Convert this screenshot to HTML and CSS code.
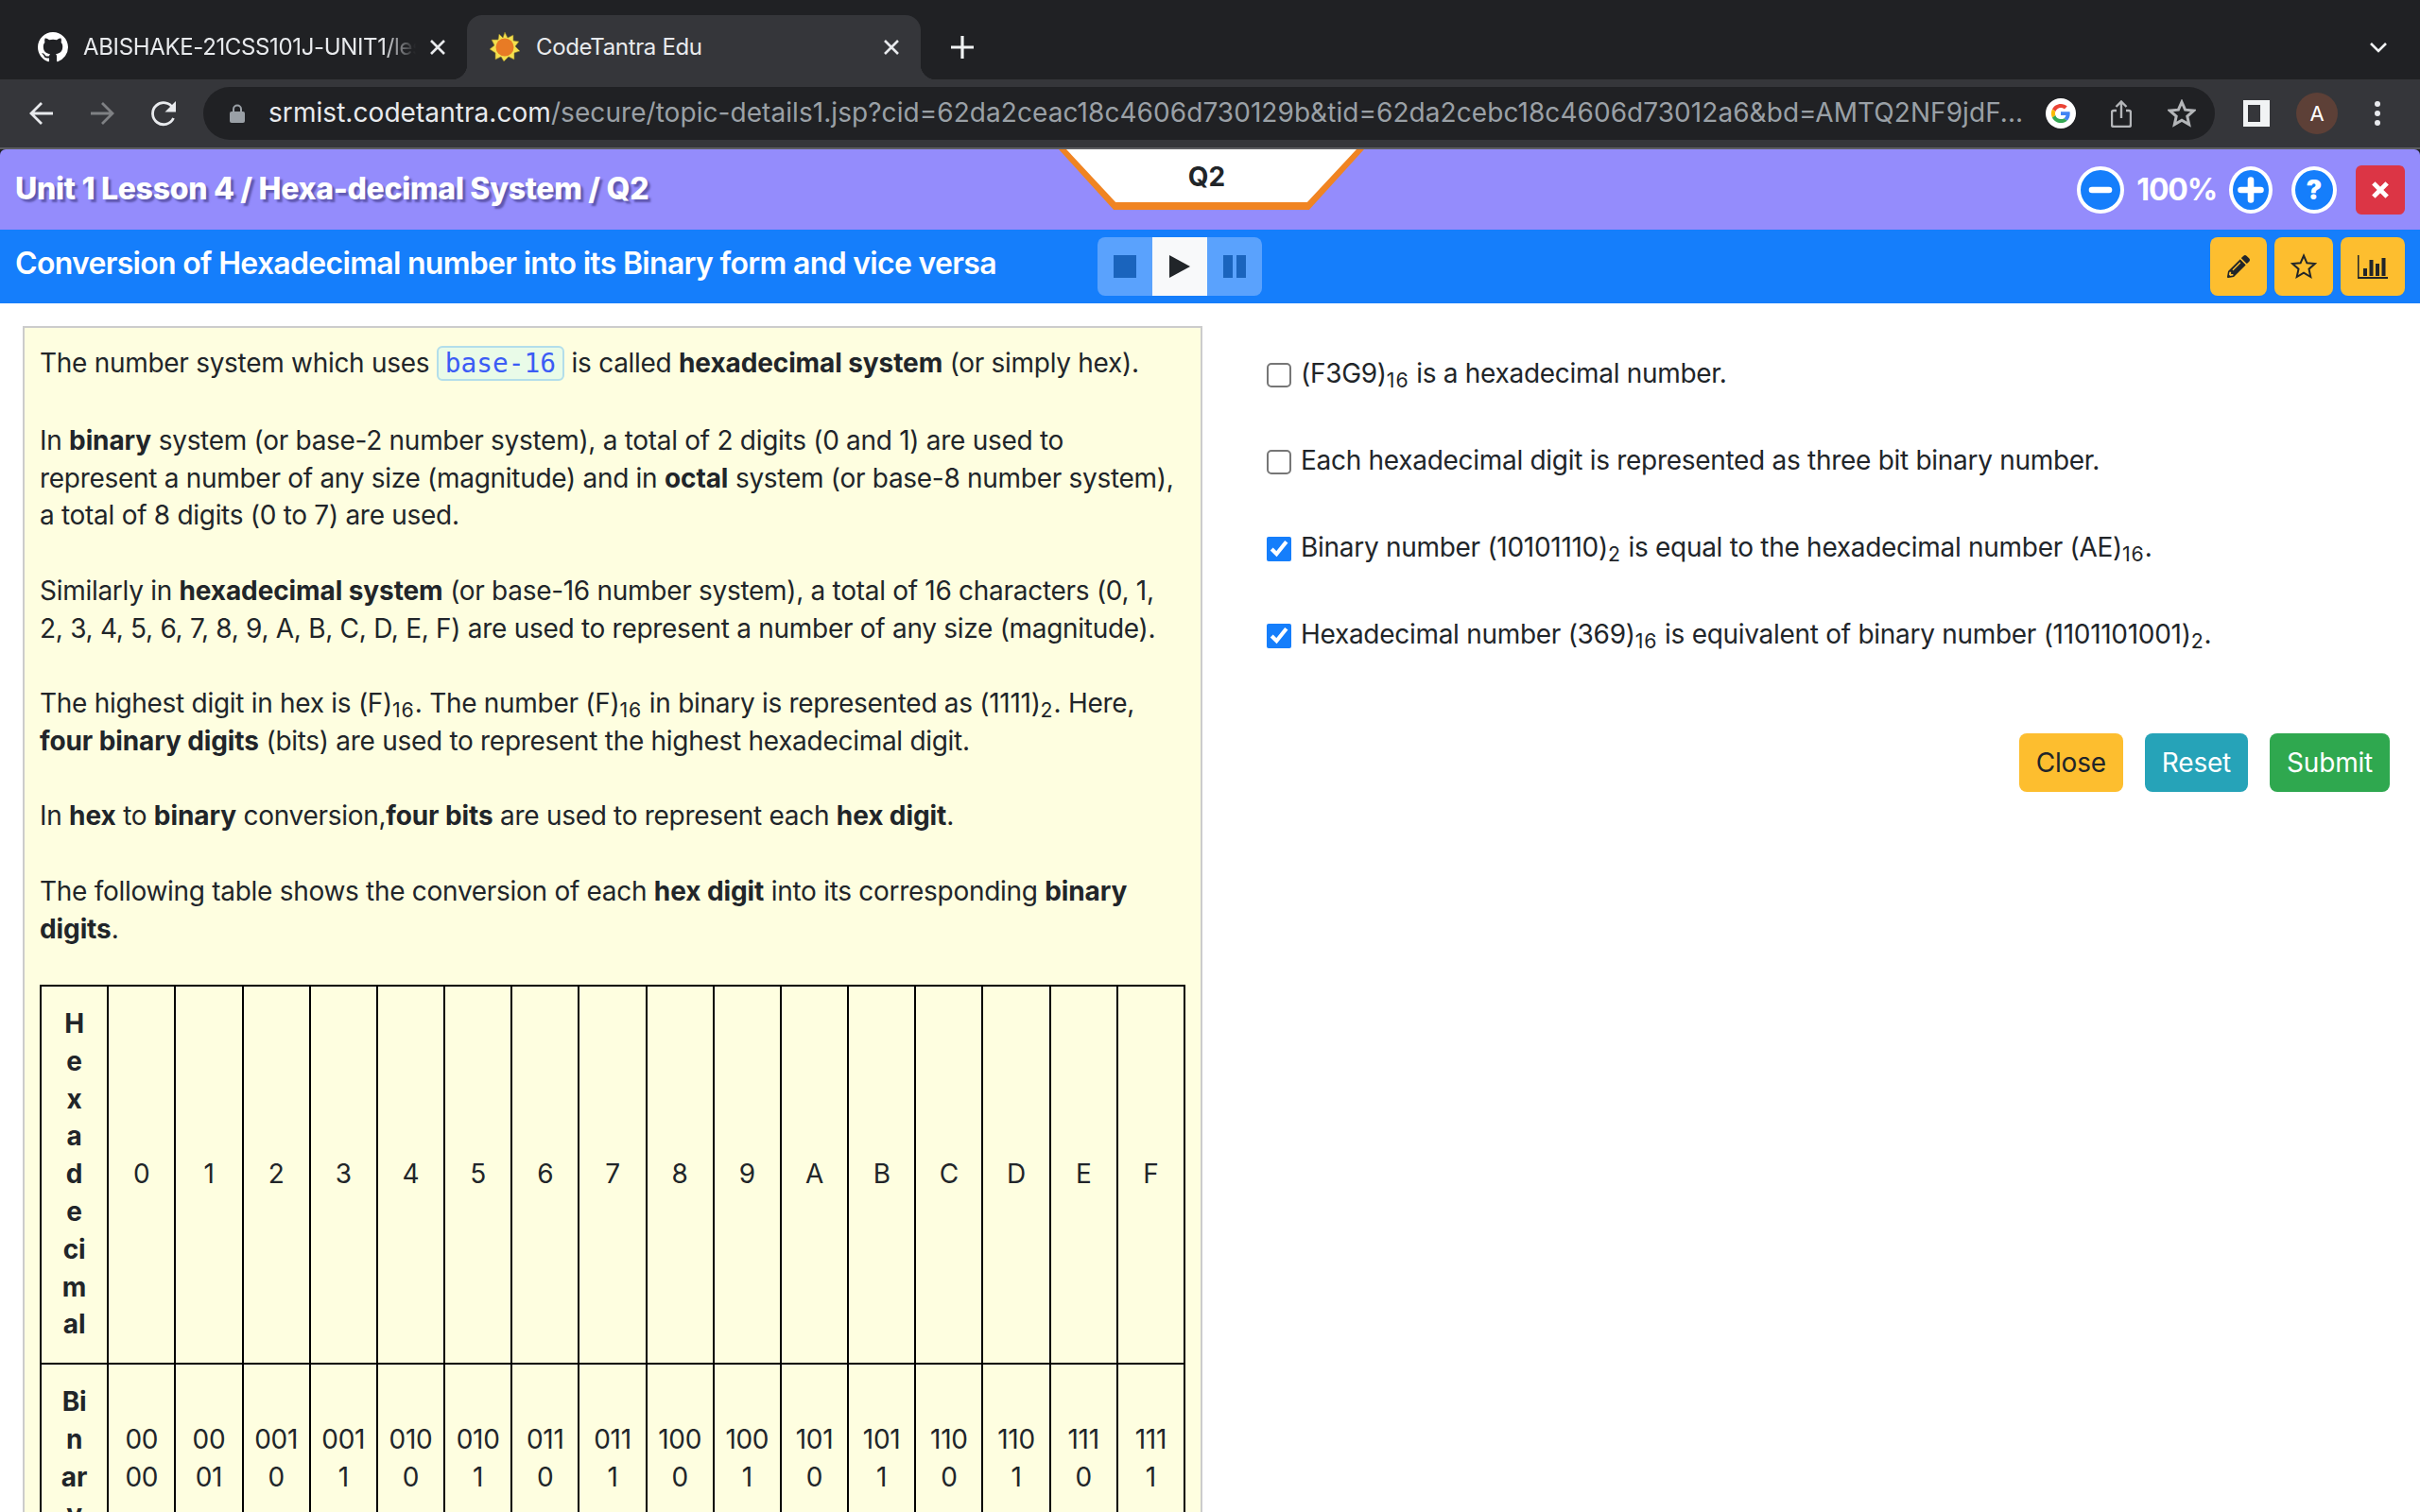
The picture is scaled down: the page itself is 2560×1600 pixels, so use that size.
FILE: index.html
```html
<!DOCTYPE html>
<html lang="en">
<head>
    <meta charset="UTF-8">
    <title>CodeTantra Edu</title>
    <link rel="stylesheet" href="styles.css">
</head>
<body>

<div class="tabstrip">
    <div class="tab tab-github">
        <svg class="tab-icon" viewBox="0 0 16 16"><path fill="#fff" d="M8 0C3.58 0 0 3.58 0 8c0 3.54 2.29 6.53 5.47 7.59.4.07.55-.17.55-.38 0-.19-.01-.82-.01-1.49-2.01.37-2.53-.49-2.69-.94-.09-.23-.48-.94-.82-1.13-.28-.15-.68-.52-.01-.53.63-.01 1.08.58 1.23.82.72 1.21 1.87.87 2.33.66.07-.52.28-.87.51-1.07-1.78-.2-3.64-.89-3.64-3.95 0-.87.31-1.59.82-2.15-.08-.2-.36-1.02.08-2.12 0 0 .67-.21 2.2.82.64-.18 1.32-.27 2-.27.68 0 1.36.09 2 .27 1.53-1.04 2.2-.82 2.2-.82.44 1.1.16 1.92.08 2.12.51.56.82 1.27.82 2.15 0 3.07-1.87 3.75-3.65 3.95.29.25.54.73.54 1.48 0 1.07-.01 1.93-.01 2.2 0 .21.15.46.55.38A8.013 8.013 0 0016 8c0-4.42-3.58-8-8-8z"/></svg>
        <span class="tab-title tab-title-fade">ABISHAKE-21CSS101J-UNIT1/lesson</span>
        <svg class="tab-close" viewBox="0 0 16 16"><path d="M1 1l14 14M15 1L1 15"/></svg>
    </div>
    <div class="tab tab-active">
        <svg class="tab-icon" viewBox="0 0 32 32">
            <polygon fill="#f4e04d" stroke="#8a7a2a" stroke-width=".6" points="16,0 19,6 25,3 25,9 31,10 27,15 32,20 26,22 26,29 20,26 15,31 12,26 6,29 6,22 0,18 5,14 2,8 9,8 10,2 14,6"/>
            <circle cx="16" cy="16" r="9.5" fill="#e87b25"/>
        </svg>
        <span class="tab-title">CodeTantra Edu</span>
        <svg class="tab-close" viewBox="0 0 16 16"><path d="M1 1l14 14M15 1L1 15"/></svg>
    </div>
    <svg class="new-tab" viewBox="0 0 24 24"><path d="M12 0v24M0 12h24"/></svg>
    <svg class="tab-search" viewBox="0 0 18 11"><path d="M1 1l8 8 8-8"/></svg>
</div>

<div class="toolbar">
    <svg class="nav-icon" viewBox="0 0 26 26"><path d="M25 13H3M13 2L2 13l11 11"/></svg>
    <svg class="nav-icon nav-off" viewBox="0 0 26 26"><path d="M1 13h22M13 2l11 11-11 11"/></svg>
    <svg class="nav-icon nav-reload" viewBox="0 0 28 28"><path d="M24.500 19a11.500 11.500 0 1 1-.5-10.500"/><path class="solid" d="M27 1v11.500H15.500z"/></svg>
    <div class="omnibox">
        <svg class="lock" viewBox="0 0 16 20"><path class="lock-body" d="M2 8h12a2 2 0 0 1 2 2v8a2 2 0 0 1-2 2H2a2 2 0 0 1-2-2v-8a2 2 0 0 1 2-2z"/><path class="lock-loop" d="M4 9V5.500a4 4 0 0 1 8 0V9"/></svg>
        <span class="url"><span class="url-host">srmist.codetantra.com</span>/secure/topic-details1.jsp?cid=62da2ceac18c4606d730129b&amp;tid=62da2cebc18c4606d73012a6&amp;bd=AMTQ2NF9jdF...</span>
        <svg class="google" viewBox="-14 -14 76 76">
            <circle cx="24" cy="24" r="38" fill="#fff"/>
            <path fill="#EA4335" d="M24 9.500c3.540 0 6.710 1.220 9.210 3.600l6.850-6.850C35.900 2.380 30.470 0 24 0 14.620 0 6.510 5.380 2.560 13.220l7.980 6.190C12.430 13.720 17.740 9.500 24 9.500z"/>
            <path fill="#4285F4" d="M46.980 24.550c0-1.570-.15-3.090-.38-4.550H24v9.020h12.940c-.58 2.960-2.260 5.480-4.780 7.180l7.730 6c4.510-4.180 7.090-10.360 7.090-17.650z"/>
            <path fill="#FBBC05" d="M10.530 28.590c-.48-1.450-.76-2.990-.76-4.590s.27-3.140.76-4.590l-7.980-6.190C.92 16.460 0 20.120 0 24c0 3.880.92 7.540 2.560 10.780l7.970-6.190z"/>
            <path fill="#34A853" d="M24 48c6.480 0 11.930-2.130 15.890-5.810l-7.730-6c-2.150 1.450-4.920 2.300-8.160 2.300-6.260 0-11.570-4.220-13.470-9.910l-7.980 6.190C6.510 42.620 14.620 48 24 48z"/>
        </svg>
        <svg class="share" viewBox="0 0 22 29"><path d="M6 11H3a2 2 0 0 0-2 2v13a2 2 0 0 0 2 2h16a2 2 0 0 0 2-2V13a2 2 0 0 0-2-2h-3M11 19V2M5.500 7L11 1.500 16.500 7"/></svg>
        <svg class="bookmark" viewBox="0 0 30 30"><path d="M15 3l3.600 8.200 8.900.9-6.700 5.900 1.900 8.800-7.700-4.500-7.700 4.500 1.900-8.800-6.700-5.900 8.900-.9z"/></svg>
    </div>
    <div class="side-panel"><div class="side-panel-inner"></div></div>
    <div class="avatar">A</div>
    <div class="menu-dots"><i></i><i></i><i></i></div>
</div>
<div class="toolbar-line"></div>

<header class="topbar">
    <h1 class="crumbs">Unit 1 Lesson 4 / Hexa-decimal System / Q2</h1>
    <div class="q-tab"><div class="q-tab-inner">Q2</div></div>
    <div class="zoom-tools">
        <button class="round-btn round-minus"><svg viewBox="0 0 20 20"><path d="M4 10h12"/></svg></button>
        <span class="zoom-value">100%</span>
        <button class="round-btn round-plus"><svg viewBox="0 0 20 20"><path d="M10 3v14M3 10h14"/></svg></button>
        <button class="round-btn round-help">?</button>
        <button class="exit-btn"><svg viewBox="0 0 20 20"><path d="M3.500 3.500l13 13M16.500 3.500l-13 13"/></svg></button>
    </div>
</header>

<div class="subbar">
    <h2 class="lesson-title">Conversion of Hexadecimal number into its Binary form and vice versa</h2>
    <div class="player">
        <button class="player-btn"><span class="icon-stop"></span></button>
        <button class="player-btn player-on"><span class="icon-play"></span></button>
        <button class="player-btn"><span class="icon-pause"></span></button>
    </div>
    <div class="side-tools">
        <button class="tool-btn tool-edit"><svg viewBox="0 0 512 512"><path d="M497.900 142.100l-46.100 46.100c-4.700 4.700-12.300 4.700-17 0l-111-111c-4.700-4.700-4.700-12.300 0-17l46.100-46.100c18.700-18.700 49.100-18.700 67.900 0l60.100 60.100c18.800 18.700 18.800 49.100 0 67.900zM284.200 99.800L21.600 362.400.4 483.900c-2.900 16.400 11.400 30.600 27.800 27.800l121.500-21.300 262.600-262.600c4.700-4.700 4.700-12.300 0-17l-111-111c-4.800-4.700-12.400-4.700-17.100 0zM124.100 339.900c-5.500-5.500-5.500-14.300 0-19.800l154-154c5.500-5.500 14.300-5.500 19.800 0s5.500 14.300 0 19.800l-154 154c-5.500 5.500-14.300 5.500-19.800 0zM88 424h48v36.300l-64.500 11.300-31.100-31.100L51.700 376H88v48z"/></svg></button>
        <button class="tool-btn tool-star"><svg viewBox="0 0 28 28"><path d="M14 2.500l3.400 7.800 8.400.8-6.300 5.600 1.800 8.300-7.300-4.300-7.300 4.300 1.800-8.300-6.300-5.600 8.400-.8z"/></svg></button>
        <button class="tool-btn tool-chart"><svg viewBox="0 0 32 25"><path d="M0 0h1.500v23H32v2H0z"/><path d="M6 14h4v8H6zM12.500 5h4v17h-4zM19 9h4v13h-4zM25.500 3h4v19h-4z"/></svg></button>
    </div>
</div>

<main class="workspace">
    <section class="theory">
        <p class="theory-first">The number system which uses <code>base-16</code> is called <b>hexadecimal system</b> (or simply hex).</p>
        <p>In <b>binary</b> system (or base-2 number system), a total of 2 digits (0 and 1) are used to represent a number of any size (magnitude) and in <b>octal</b> system (or base-8 number system), a total of 8 digits (0 to 7) are used.</p>
        <p>Similarly in <b>hexadecimal system</b> (or base-16 number system), a total of 16 characters (0, 1, 2, 3, 4, 5, 6, 7, 8, 9, A, B, C, D, E, F) are used to represent a number of any size (magnitude).</p>
        <p>The highest digit in hex is (F)<sub>16</sub>. The number (F)<sub>16</sub> in binary is represented as (1111)<sub>2</sub>. Here, <b>four binary digits</b> (bits) are used to represent the highest hexadecimal digit.</p>
        <p>In <b>hex</b> to <b>binary</b> conversion,<b>four bits</b> are used to represent each <b>hex digit</b>.</p>
        <p>The following table shows the conversion of each <b>hex digit</b> into its corresponding <b>binary digits</b>.</p>
        <table class="hex-table">
            <tr>
                <th>H<br>e<br>x<br>a<br>d<br>e<br>ci<br>m<br>al</th>
                <td>0</td><td>1</td><td>2</td><td>3</td><td>4</td><td>5</td><td>6</td><td>7</td>
                <td>8</td><td>9</td><td>A</td><td>B</td><td>C</td><td>D</td><td>E</td><td>F</td>
            </tr>
            <tr>
                <th>Bi<br>n<br>ar<br>y</th>
                <td>00<br>00</td><td>00<br>01</td><td>001<br>0</td><td>001<br>1</td>
                <td>010<br>0</td><td>010<br>1</td><td>011<br>0</td><td>011<br>1</td>
                <td>100<br>0</td><td>100<br>1</td><td>101<br>0</td><td>101<br>1</td>
                <td>110<br>0</td><td>110<br>1</td><td>111<br>0</td><td>111<br>1</td>
            </tr>
        </table>
    </section>

    <section class="question">
        <label class="option"><input type="checkbox"><span>(F3G9)<sub>16</sub> is a hexadecimal number.</span></label>
        <label class="option"><input type="checkbox"><span>Each hexadecimal digit is represented as three bit binary number.</span></label>
        <label class="option"><input type="checkbox" checked><span>Binary number (10101110)<sub>2</sub> is equal to the hexadecimal number (AE)<sub>16</sub>.</span></label>
        <label class="option"><input type="checkbox" checked><span>Hexadecimal number (369)<sub>16</sub> is equivalent of binary number (1101101001)<sub>2</sub>.</span></label>
        <div class="actions">
            <button class="act act-close">Close</button>
            <button class="act act-reset">Reset</button>
            <button class="act act-submit">Submit</button>
        </div>
    </section>
</main>

</body>
</html>
```
FILE: styles.css
```css
* {
    box-sizing: border-box;
}

html, body {
    height: 100%;
}

body {
    margin: 0;
    height: 1600px;
    overflow: hidden;
    display: flex;
    flex-direction: column;
    font-family: Inter, "Noto Sans", sans-serif;
    font-size: 28px;
    line-height: 39.76px;
    color: #212529;
    background-color: #202124;
}

button {
    font-family: inherit;
    border: none;
    padding: 0;
    cursor: pointer;
}

/* browser chrome */
.tabstrip {
    height: 84px;
    flex-shrink: 0;
    display: flex;
    align-items: flex-end;
    background-color: #202124;
    color: #e8eaed;
    font-size: 24px;
    letter-spacing: -0.35px;
}

.tab {
    position: relative;
    height: 68px;
    display: flex;
    align-items: center;
}

.tab-github {
    width: 494px;
    padding-left: 40px;
}

.tab-active {
    width: 480px;
    padding-left: 24px;
    background-color: #35363a;
    border-radius: 16px 16px 0 0;
}

.tab-active::before,
.tab-active::after {
    content: "";
    position: absolute;
    bottom: 0;
    width: 16px;
    height: 16px;
}

.tab-active::before {
    left: -16px;
    background: radial-gradient(circle at 0 0, #202124 16px, #35363a 16.5px);
}

.tab-active::after {
    right: -16px;
    background: radial-gradient(circle at 100% 0, #202124 16px, #35363a 16.5px);
}

.tab-icon {
    width: 32px;
    height: 32px;
    flex-shrink: 0;
    margin-right: 17px;
}

.tab-github .tab-icon {
    margin-right: 16px;
}

.tab-title {
    flex: 1;
    overflow: hidden;
    white-space: nowrap;
}

.tab-title-fade {
    -webkit-mask-image: linear-gradient(to right, #000 90%, transparent 100%);
    mask-image: linear-gradient(to right, #000 90%, transparent 100%);
}

.tab-close {
    width: 16px;
    height: 16px;
    margin: 0 23px 0 15px;
    flex-shrink: 0;
    fill: none;
    stroke: #e8eaed;
    stroke-width: 2.6;
}

.new-tab {
    width: 24px;
    height: 24px;
    margin: 0 0 22px 32px;
    fill: none;
    stroke: #f1f3f4;
    stroke-width: 3.2;
}

.tab-search {
    width: 18px;
    height: 11px;
    margin: 0 35px 28px auto;
    fill: none;
    stroke: #f1f3f4;
    stroke-width: 2.6;
}

.toolbar {
    height: 72px;
    flex-shrink: 0;
    display: flex;
    align-items: center;
    padding: 0 0 0 31px;
    background-color: #35363a;
}

.nav-icon {
    width: 26px;
    height: 26px;
    margin-right: 38px;
    fill: none;
    stroke: #e8eaed;
    stroke-width: 2.8;
}

.nav-off {
    stroke: #7f8184;
}

.nav-reload {
    width: 28px;
    height: 28px;
    margin-right: 36px;
}

.nav-icon .solid {
    fill: #e8eaed;
    stroke: none;
}

.omnibox {
    width: 2128px;
    height: 56px;
    margin-left: -8px;
    flex-shrink: 0;
    display: flex;
    align-items: center;
    padding-left: 28px;
    border-radius: 28px;
    background-color: #202124;
}

.lock {
    width: 16px;
    height: 20px;
    margin-right: 25px;
    flex-shrink: 0;
}

.lock-body {
    fill: #9aa0a6;
}

.lock-loop {
    fill: none;
    stroke: #9aa0a6;
    stroke-width: 2;
}

.url {
    width: 1855px;
    flex-shrink: 0;
    white-space: nowrap;
    overflow: hidden;
    font-size: 28px;
    letter-spacing: 0.06px;
    color: #9aa0a6;
}

.url-host {
    color: #e8eaed;
}

.google {
    width: 32px;
    height: 32px;
    margin-left: 25px;
    flex-shrink: 0;
}

.share {
    width: 22px;
    height: 29px;
    margin-left: 37px;
    flex-shrink: 0;
    fill: none;
    stroke: #b4b6b9;
    stroke-width: 2.4;
}

.bookmark {
    width: 30px;
    height: 30px;
    margin-left: 38px;
    flex-shrink: 0;
    fill: none;
    stroke: #b4b6b9;
    stroke-width: 3;
}

.side-panel {
    width: 28px;
    height: 28px;
    margin-left: 30px;
    padding: 5px 10px 5px 5px;
    background-color: #f1f3f4;
}

.side-panel-inner {
    height: 100%;
    background-color: #35363a;
}

.avatar {
    width: 44px;
    height: 44px;
    margin-left: 28px;
    border-radius: 50%;
    background-color: #5d4037;
    color: #fff;
    font-size: 22px;
    line-height: 44px;
    text-align: center;
}

.menu-dots {
    margin-left: 39px;
    display: flex;
    flex-direction: column;
    gap: 4px;
}

.menu-dots i {
    width: 6px;
    height: 6px;
    border-radius: 50%;
    background-color: #e8eaed;
}

.toolbar-line {
    height: 2px;
    flex-shrink: 0;
    background-color: #5c5d61;
}

/* page header */
.topbar {
    position: relative;
    height: 85px;
    flex-shrink: 0;
    display: flex;
    align-items: center;
    padding: 0 16px;
    border-radius: 6px 6px 0 0;
    background-color: #948cfc;
    color: #fff;
}

.crumbs {
    margin: -2px 0 0;
    font-size: 32px;
    font-weight: 800;
    letter-spacing: -0.3px;
    text-shadow: 3px 3px 2px #5f58b0;
}

.q-tab {
    position: absolute;
    left: 1120px;
    top: 0;
    width: 323px;
    height: 64px;
    background-color: #f08422;
    clip-path: polygon(0 0, 100% 0, 82% 100%, 18% 100%);
}

.q-tab-inner {
    height: 56px;
    margin: 0 8px;
    padding-right: 10px;
    background-color: #fff;
    clip-path: polygon(0 0, 100% 0, 83% 100%, 17% 100%);
    color: #212529;
    font-size: 28px;
    font-weight: 700;
    line-height: 58px;
    text-align: center;
}

.zoom-tools {
    margin-left: auto;
    display: flex;
    align-items: center;
}

.round-btn {
    width: 48px;
    height: 50px;
    display: flex;
    align-items: center;
    justify-content: center;
    border: 4px solid #fff;
    border-radius: 50%;
    background-color: #157efb;
    color: #fff;
}

.round-btn svg {
    width: 30px;
    height: 30px;
    fill: none;
    stroke: #fff;
    stroke-width: 4.4;
    stroke-linecap: round;
}

.round-minus {
    width: 50px;
}

.round-plus {
    width: 46px;
}

.round-help {
    margin-left: 20px;
    font-size: 28px;
    font-weight: 900;
}

.zoom-value {
    margin: 0 13px;
    font-size: 32px;
    font-weight: 700;
    letter-spacing: -1.2px;
}

.exit-btn {
    width: 52px;
    height: 52px;
    margin-left: 20px;
    display: flex;
    align-items: center;
    justify-content: center;
    border-radius: 6px;
    background-color: #dc3545;
}

.exit-btn svg {
    width: 22px;
    height: 22px;
    fill: none;
    stroke: #fff;
    stroke-width: 4.4;
}

.subbar {
    height: 78px;
    flex-shrink: 0;
    display: flex;
    align-items: center;
    padding: 0 16px;
    background-color: #157efb;
}

.lesson-title {
    width: 1145px;
    margin: -7px 0 0;
    color: #fff;
    font-size: 32px;
    font-weight: 600;
    letter-spacing: -0.7px;
}

.player {
    display: flex;
    border-radius: 8px;
    overflow: hidden;
}

.player-btn {
    width: 58px;
    height: 62px;
    display: flex;
    align-items: center;
    justify-content: center;
    background-color: #5aa2fd;
}

.player-on {
    background-color: #f8f9fa;
}

.icon-stop {
    width: 24px;
    height: 24px;
    background-color: #1a64bd;
}

.icon-play {
    width: 22px;
    height: 24px;
    background-color: #212529;
    clip-path: polygon(0 0, 100% 50%, 0 100%);
}

.icon-pause {
    width: 24px;
    height: 24px;
    border-left: 10px solid #1a64bd;
    border-right: 10px solid #1a64bd;
}

.side-tools {
    margin-left: auto;
    display: flex;
    gap: 8px;
}

.tool-btn {
    height: 62px;
    display: flex;
    align-items: center;
    justify-content: center;
    border-radius: 8px;
    background-color: #fdbe2f;
}

.tool-btn svg {
    fill: #212529;
}

.tool-edit {
    width: 60px;
}

.tool-edit svg {
    width: 24px;
    height: 24px;
}

.tool-star {
    width: 62px;
}

.tool-star svg {
    width: 28px;
    height: 28px;
    fill: none;
    stroke: #212529;
    stroke-width: 2;
}

.tool-chart {
    width: 68px;
}

.tool-chart svg {
    width: 32px;
    height: 25px;
}

/* content */
.workspace {
    flex: 1;
    min-height: 0;
    display: flex;
    align-items: flex-start;
    padding: 24px 32px 0 24px;
    background-color: #fff;
    letter-spacing: -0.29px;
}

.theory {
    width: 1248px;
    flex-shrink: 0;
    padding: 18px 16px 0;
    border: 2px solid #ccc;
    background-color: #fefee0;
}

.theory p {
    max-width: 1203px;
    margin: 0 0 39.76px;
}

.theory .theory-first {
    margin-bottom: 42px;
}

b, th {
    font-weight: 700;
    letter-spacing: -0.1px;
}

sub {
    font-size: 76%;
    line-height: 0;
    letter-spacing: 1px;
    position: relative;
    bottom: -0.25em;
    vertical-align: baseline;
}

code {
    padding: 0 7px;
    border: 2px solid #b3deea;
    border-radius: 6px;
    background-color: #e9fbe8;
    color: #3b5cf5;
    font-family: "DejaVu Sans Mono", monospace;
    font-size: 27.8px;
    letter-spacing: 0;
}

.hex-table {
    width: 1212px;
    border-collapse: collapse;
    table-layout: fixed;
    margin-top: -1px;
}

.hex-table th,
.hex-table td {
    padding: 20px 0;
    border: 2px solid #000;
    text-align: center;
    vertical-align: middle;
}

.question {
    flex: 1;
    padding: 6px 0 0 68px;
}

.option {
    height: 92px;
    display: flex;
    align-items: center;
    gap: 10px;
}

.option input {
    width: 26px;
    height: 26px;
    margin: 0;
    accent-color: #157efb;
    flex-shrink: 0;
}

.option input:not(:checked) {
    appearance: none;
    border: 2px solid #767676;
    border-radius: 5px;
    background-color: #fff;
}

.option span {
    margin-top: -3px;
}

.actions {
    display: flex;
    justify-content: flex-end;
    gap: 23px;
    margin-top: 57px;
}

.act {
    height: 62px;
    padding: 0 18px;
    border-radius: 8px;
    font-size: 28px;
    letter-spacing: -0.2px;
    color: #fff;
}

.act-close {
    background-color: #fdbe2f;
    color: #212529;
}

.act-reset {
    background-color: #26a3b8;
}

.act-submit {
    background-color: #2fa84f;
}
```
